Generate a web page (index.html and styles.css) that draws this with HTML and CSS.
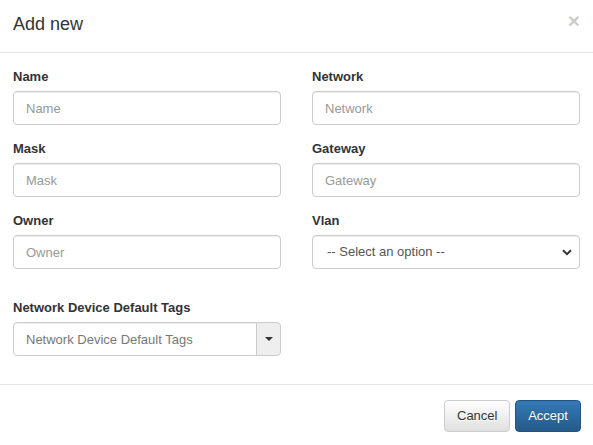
FILE: index.html
```html
<!DOCTYPE html>
<html>
<head>
<meta charset="utf-8">
<link rel="stylesheet" href="styles.css">
</head>
<body>
<div class="modal">
  <div class="modal-header">
    <h4 class="modal-title">Add new</h4>
    <span class="close">&times;</span>
  </div>
  <div class="modal-body">
    <div class="grid">
      <div class="form-group">
        <label>Name</label>
        <input class="form-control" placeholder="Name">
      </div>
      <div class="form-group">
        <label>Network</label>
        <input class="form-control" placeholder="Network">
      </div>
      <div class="form-group">
        <label>Mask</label>
        <input class="form-control" placeholder="Mask">
      </div>
      <div class="form-group">
        <label>Gateway</label>
        <input class="form-control" placeholder="Gateway">
      </div>
      <div class="form-group">
        <label>Owner</label>
        <input class="form-control" placeholder="Owner">
      </div>
      <div class="form-group">
        <label>Vlan</label>
        <div class="select-wrap">
          <select class="form-control select"><option>-- Select an option --</option></select>
          <svg class="chev" width="10" height="7" viewBox="0 0 10 7"><path d="M1 1.2 L5 5.2 L9 1.2" fill="none" stroke="#333" stroke-width="2"/></svg>
        </div>
      </div>
    </div>
    <div class="grid tags-row">
      <div class="form-group last">
        <label>Network Device Default Tags</label>
        <div class="input-group">
          <input class="form-control ig-input" placeholder="Network Device Default Tags">
          <span class="ig-btn"><span class="caret"></span></span>
        </div>
      </div>
    </div>
  </div>
  <div class="modal-footer">
    <button class="btn btn-default">Cancel</button>
    <button class="btn btn-primary">Accept</button>
  </div>
</div>
</body>
</html>
```

FILE: styles.css
```css
* { box-sizing: border-box; }
html, body { margin: 0; padding: 0; background: #fff; }
body {
  font-family: "Liberation Sans", Arial, sans-serif;
  font-size: 13px;
  line-height: 20px;
  color: #333;
  width: 593px;
  height: 445px;
  overflow: hidden;
}
.modal { width: 593px; }
.modal-header {
  height: 53px;
  padding: 11px 13px 15px;
  border-bottom: 1px solid #e5e5e5;
  display: flex;
  justify-content: space-between;
  align-items: flex-start;
}
.modal-title {
  margin: 0;
  font-size: 18px;
  font-weight: normal;
  line-height: 26px;
}
.close {
  font-size: 21px;
  font-weight: bold;
  line-height: 14px;
  color: #000;
  opacity: 0.2;
  margin-top: 3px;
  margin-right: 0px;
}
.modal-body { padding: 13px 13px 13px; }
.grid {
  display: grid;
  grid-template-columns: 1fr 1fr;
  column-gap: 31px;
}
.form-group { margin-bottom: 13px; }
.form-group.last { margin-bottom: 15px; }
.tags-row { margin-top: 15px; }
label {
  display: block;
  font-weight: bold;
  font-size: 13px;
  padding-top: 1px;
  margin-bottom: 4px;
  line-height: 20px;
}
.form-control {
  display: block;
  width: 100%;
  height: 34px;
  padding: 6px 12px;
  font-family: inherit;
  font-size: 13px;
  line-height: 20px;
  color: #555;
  background: #fff;
  border: 1px solid #ccc;
  border-radius: 4px;
  box-shadow: inset 0 1px 1px rgba(0,0,0,.075);
  outline: none;
}
.form-control::placeholder { color: #999; }
.select-wrap { position: relative; }
.select {
  -webkit-appearance: none;
  appearance: none;
  color: #555;
  padding-left: 14px;
}
.chev { position: absolute; right: 8px; top: 14px; pointer-events: none; }
.input-group { display: flex; }
.ig-input {
  flex: 1;
  border-radius: 4px 0 0 4px;
}
.ig-input::placeholder { color: #777; }
.ig-btn {
  width: 25px;
  height: 34px;
  background: #eee;
  border: 1px solid #ccc;
  margin-left: -1px;
  border-radius: 0 4px 4px 0;
  display: flex;
  align-items: center;
  justify-content: center;
}
.caret {
  width: 0; height: 0;
  border-top: 4px solid #333;
  border-left: 4px solid transparent;
  border-right: 4px solid transparent;
}
.modal-footer {
  border-top: 1px solid #e5e5e5;
  padding: 15px 12px 13px;
  display: flex;
  justify-content: flex-end;
  gap: 5px;
}
.btn {
  height: 32px;
  padding: 0 12px;
  font-family: inherit;
  font-size: 13px;
  line-height: 20px;
  border-radius: 4px;
  border: 1px solid;
  cursor: pointer;
}
.btn-default {
  width: 66px;
  color: #333;
  background: linear-gradient(to bottom, #fff 0, #e0e0e0 100%);
  border-color: #ccc;
  text-shadow: 0 1px 0 #fff;
}
.btn-primary {
  width: 66px;
  color: #fff;
  background: linear-gradient(to bottom, #337ab7 0, #265a88 100%);
  border-color: #245580;
  text-shadow: 0 -1px 0 rgba(0,0,0,.2);
}
```
